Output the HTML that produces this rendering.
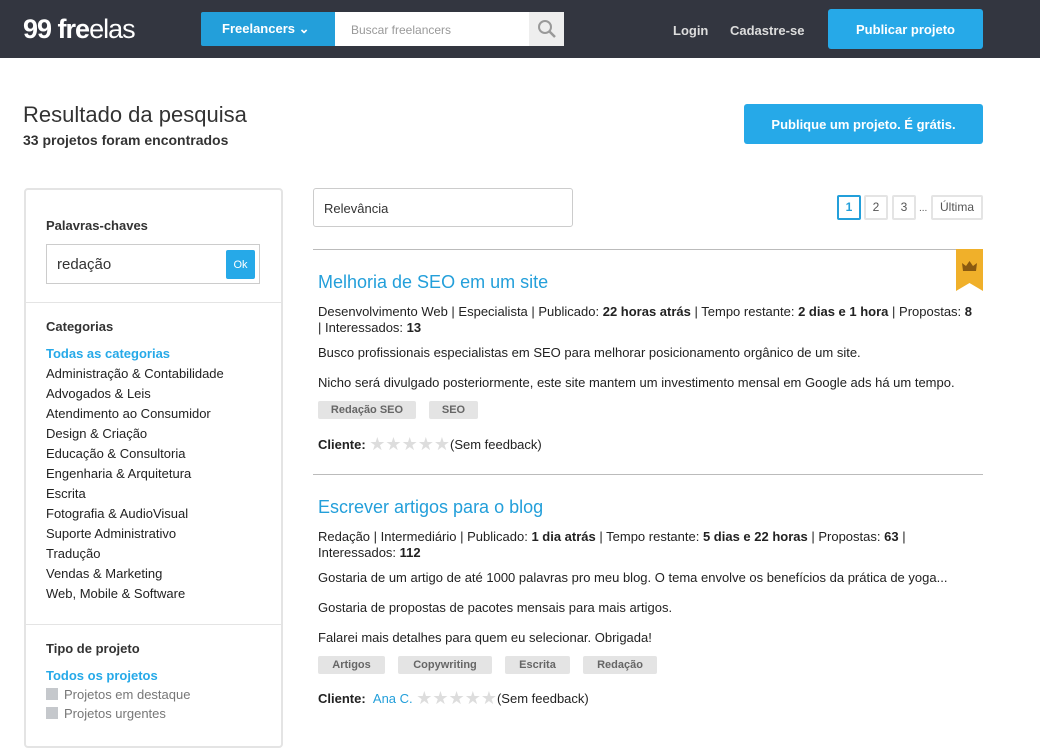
<!DOCTYPE html>
<html><head><meta charset="utf-8"><style>
*{box-sizing:border-box;margin:0;padding:0}
body{width:1040px;height:724px;overflow:hidden;background:#fff;font-family:"Liberation Sans",Arial,sans-serif;color:#222;position:relative}
.abs{position:absolute}
.hdr{left:0;top:0;width:1040px;height:58px;background:#333640}
.logo{left:23px;top:14px;color:#fff;font-weight:bold;font-size:27px;letter-spacing:-1px}
.fl{left:201px;top:12px;width:134px;height:34px;background:#239fda;color:#fff;font-weight:bold;font-size:13px;line-height:34px;padding-left:21px;border-radius:2px 0 0 2px}
.srch{left:335px;top:12px;width:195px;height:34px;background:#fff;color:#999;font-size:12px;line-height:36px;padding-left:16px}
.sbtn{left:529px;top:12px;width:35px;height:34px;background:#eee}
.nav{top:23px;color:#ddd;font-weight:bold;font-size:13px}
.btn{background:#26a9e8;color:#fff;font-weight:bold;font-size:13px;text-align:center;border-radius:3px}
h1{position:absolute;left:23px;top:102px;font-size:22px;font-weight:normal;color:#333}
.sub{left:23px;top:132px;font-size:14px;font-weight:bold;color:#333}
.side{left:24px;top:188px;width:259px;height:560px;border:2px solid #e4e4e4;border-radius:4px}
.st{font-weight:bold;font-size:13px;color:#333}
.cat{left:46px;font-size:13px;color:#222;line-height:20px}
.blue{color:#26a9e8;font-weight:bold}
.hr{height:1px;background:#e4e4e4}
.title{left:318px;font-size:18px;color:#239fda}
.meta{left:318px;width:658px;font-size:13px;line-height:16px;color:#222}
.tag{height:18px;background:#e4e4e4;color:#666;font-size:11px;font-weight:bold;line-height:18px;text-align:center;border-radius:2px}
.star{color:#ddd;font-size:18px;letter-spacing:0;vertical-align:-1px}
.pg{top:195px;height:25px;border:2px solid #e4e4e4;font-size:12px;line-height:21px;text-align:center;color:#555;border-radius:2px}
</style></head><body>
<div class="abs hdr"></div>
<div class="abs logo">99 fre<span style="font-weight:normal">elas</span></div>
<div class="abs fl">Freelancers &#8964;</div>
<div class="abs srch">Buscar freelancers</div>
<div class="abs sbtn"><svg width="35" height="34"><circle cx="16" cy="15" r="6" fill="none" stroke="#999" stroke-width="2"/><line x1="20.5" y1="19.5" x2="26" y2="25" stroke="#999" stroke-width="2.5"/></svg></div>
<div class="abs nav" style="left:673px">Login</div>
<div class="abs nav" style="left:730px">Cadastre-se</div>
<div class="abs btn" style="left:828px;top:9px;width:155px;height:40px;line-height:41px">Publicar projeto</div>
<h1>Resultado da pesquisa</h1>
<div class="abs sub">33 projetos foram encontrados</div>
<div class="abs btn" style="left:744px;top:104px;width:239px;height:40px;line-height:42px">Publique um projeto. É grátis.</div>

<div class="abs side"></div>
<div class="abs st" style="left:46px;top:218px">Palavras-chaves</div>
<div class="abs" style="left:46px;top:244px;width:214px;height:40px;border:1px solid #ccc;font-size:15px;line-height:40px;padding-left:10px;color:#333">redação</div>
<div class="abs" style="left:226px;top:250px;width:29px;height:29px;background:#26a9e8;color:#fff;font-size:11px;line-height:30px;text-align:center;border-radius:2px">Ok</div>
<div class="abs hr" style="left:26px;top:302px;width:255px"></div>
<div class="abs st" style="left:46px;top:319px">Categorias</div>
<div class="abs cat" style="top:344px"><span class="blue">Todas as categorias</span><br>Administração &amp; Contabilidade<br>Advogados &amp; Leis<br>Atendimento ao Consumidor<br>Design &amp; Criação<br>Educação &amp; Consultoria<br>Engenharia &amp; Arquitetura<br>Escrita<br>Fotografia &amp; AudioVisual<br>Suporte Administrativo<br>Tradução<br>Vendas &amp; Marketing<br>Web, Mobile &amp; Software</div>
<div class="abs hr" style="left:26px;top:624px;width:255px"></div>
<div class="abs st" style="left:46px;top:641px">Tipo de projeto</div>
<div class="abs cat" style="top:666px"><span class="blue">Todos os projetos</span></div>
<div class="abs cat" style="top:685px;line-height:19px;color:#777"><span style="display:inline-block;width:12px;height:12px;background:#c5c8cc;vertical-align:-1px;margin-right:6px"></span>Projetos em destaque<br><span style="display:inline-block;width:12px;height:12px;background:#c5c8cc;vertical-align:-1px;margin-right:6px"></span>Projetos urgentes</div>

<div class="abs" style="left:313px;top:188px;width:260px;height:39px;border:1px solid #ccc;border-radius:3px;font-size:13px;line-height:39px;padding-left:10px;color:#333">Relevância</div>
<div class="abs pg" style="left:837px;width:24px;border-color:#239fda;color:#239fda;font-weight:bold">1</div>
<div class="abs pg" style="left:864px;width:24px">2</div>
<div class="abs pg" style="left:892px;width:24px">3</div>
<div class="abs" style="left:919px;top:203px;font-size:10px;color:#555">...</div>
<div class="abs pg" style="left:931px;width:52px">Última</div>

<div class="abs" style="left:313px;top:249px;width:670px;height:1px;background:#bbb"></div>
<svg class="abs" style="left:956px;top:249px" width="27" height="42"><path d="M0 0H27V42L13.5 34L0 42Z" fill="#f0b02a"/><path d="M7 22L6 14L10 17L13.5 12L17 17L21 14L20 22Z" fill="#8a5a10"/></svg>
<div class="abs title" style="top:272px">Melhoria de SEO em um site</div>
<div class="abs meta" style="top:304px">Desenvolvimento Web | Especialista | Publicado: <b>22 horas atrás</b> | Tempo restante: <b>2 dias e 1 hora</b> | Propostas: <b>8</b> | Interessados: <b>13</b></div>
<div class="abs meta" style="top:345px">Busco profissionais especialistas em SEO para melhorar posicionamento orgânico de um site.</div>
<div class="abs meta" style="top:375px;width:670px">Nicho será divulgado posteriormente, este site mantem um investimento mensal em Google ads há um tempo.</div>
<div class="abs tag" style="left:318px;top:401px;width:98px">Redação SEO</div>
<div class="abs tag" style="left:429px;top:401px;width:49px">SEO</div>
<div class="abs meta" style="top:436px"><b>Cliente:</b> <span class="star">★★★★★</span>(Sem feedback)</div>

<div class="abs" style="left:313px;top:474px;width:670px;height:1px;background:#bbb"></div>
<div class="abs title" style="top:497px">Escrever artigos para o blog</div>
<div class="abs meta" style="top:529px">Redação | Intermediário | Publicado: <b>1 dia atrás</b> | Tempo restante: <b>5 dias e 22 horas</b> | Propostas: <b>63</b> | Interessados: <b>112</b></div>
<div class="abs meta" style="top:570px;width:670px">Gostaria de um artigo de até 1000 palavras pro meu blog. O tema envolve os benefícios da prática de yoga...</div>
<div class="abs meta" style="top:600px">Gostaria de propostas de pacotes mensais para mais artigos.</div>
<div class="abs meta" style="top:630px">Falarei mais detalhes para quem eu selecionar. Obrigada!</div>
<div class="abs tag" style="left:318px;top:656px;width:67px">Artigos</div>
<div class="abs tag" style="left:398px;top:656px;width:94px">Copywriting</div>
<div class="abs tag" style="left:505px;top:656px;width:65px">Escrita</div>
<div class="abs tag" style="left:583px;top:656px;width:74px">Redação</div>
<div class="abs meta" style="top:690px"><b>Cliente:</b> &nbsp;<span style="color:#239fda">Ana C.</span> <span class="star">★★★★★</span>(Sem feedback)</div>
</body></html>
